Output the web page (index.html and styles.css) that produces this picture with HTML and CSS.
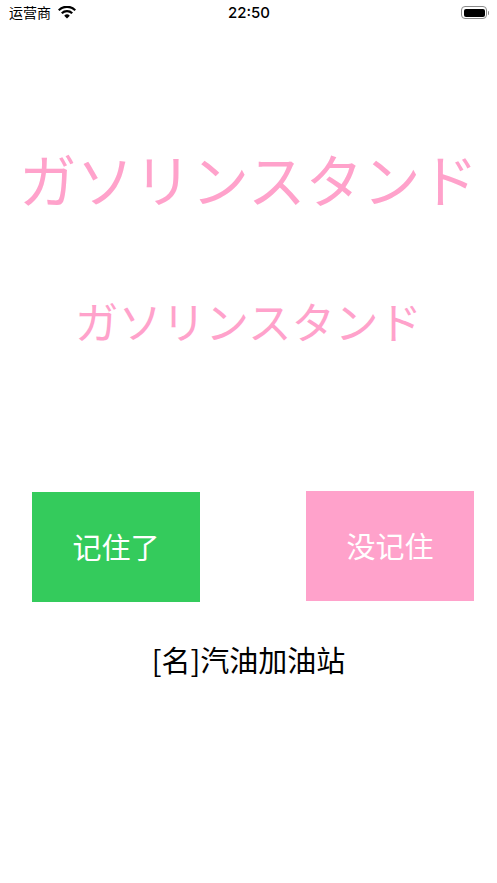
FILE: index.html
```html
<!DOCTYPE html>
<html lang="ja">
<head>
<meta charset="utf-8">
<title>Flashcard</title>
<link rel="stylesheet" href="styles.css">
</head>
<body>
<div class="status">
  <div class="status-left"><span class="carrier" lang="zh">运营商</span>
    <svg class="wifi" viewBox="0 0 18 13" width="18" height="13"><path d="M9 12.6 6.200 9.700a4 4 0 0 1 5.600 0zM4.600 8.100 3 6.500a8.500 8.500 0 0 1 12 0l-1.600 1.600a6.200 6.200 0 0 0-8.800 0zM1.500 5 0 3.400a12.700 12.700 0 0 1 18 0L16.500 5a10.600 10.600 0 0 0-15 0z" fill="#000"/></svg>
  </div>
  <div class="time">22:50</div>
  <div class="status-right">
    <div class="battery"><div class="battery-fill"></div></div><div class="battery-cap"></div>
  </div>
</div>
<main class="card">
  <div class="word-large">ガソリンスタンド</div>
  <div class="word-small">ガソリンスタンド</div>
  <div class="buttons">
    <div class="btn green" lang="zh">记住了</div>
    <div class="btn pink" lang="zh">没记住</div>
  </div>
  <div class="meaning" lang="zh">[名]汽油加油站</div>
</main>
</body>
</html>
```
FILE: styles.css
```css
* { box-sizing: border-box; }
html, body { margin: 0; padding: 0; }
body { width: 497px; height: 883px; background: #fff; overflow: hidden; font-family: "Noto Sans CJK SC", "Liberation Sans", sans-serif; color: #000; }
.status { height: 26px; display: grid; grid-template-columns: 1fr auto 1fr; align-items: center; padding: 0 8px 0 9px; }
.status-left { display: flex; align-items: center; gap: 7px; }
.carrier { font-size: 14px; line-height: 26px; font-weight: 400; margin-top: -3px; }
.wifi { margin-top: -2px; }
.time { font-family: "Inter", sans-serif; font-size: 15px; font-weight: 500; margin-top: -1px; }
.status-right { display: flex; align-items: center; justify-content: flex-end; margin-top: -1px; }
.battery { width: 26px; height: 13px; border: 1px solid #8a8a8a; border-radius: 4px; padding: 1.500px; }
.battery-fill { height: 100%; background: #000; border-radius: 2px; }
.battery-cap { width: 1.500px; height: 4px; background: #8a8a8a; border-radius: 0 2px 2px 0; margin-left: 0.500px; }
.card { display: flex; flex-direction: column; align-items: center; }
.word-large, .word-small { font-family: "Noto Sans CJK JP", sans-serif; font-weight: 400; color: #ffa2cb; white-space: nowrap; line-height: 1; }
.word-large { font-size: 57.500px; margin-top: 124px; }
.word-small { font-size: 43.500px; margin-top: 91px; }
.buttons { width: 100%; display: flex; justify-content: space-between; align-items: flex-start; padding: 0 23px 0 32px; margin-top: 149px; }
.btn { width: 168px; height: 110px; display: flex; align-items: center; justify-content: center; color: #fff; font-size: 29px; font-weight: 400; padding-bottom: 2px; }
.green { background: #34cb5c; margin-top: 1px; }
.pink { background: #ffa2cb; }
.meaning { font-size: 29px; line-height: 40px; margin-top: 37px; font-weight: 400; }
```
